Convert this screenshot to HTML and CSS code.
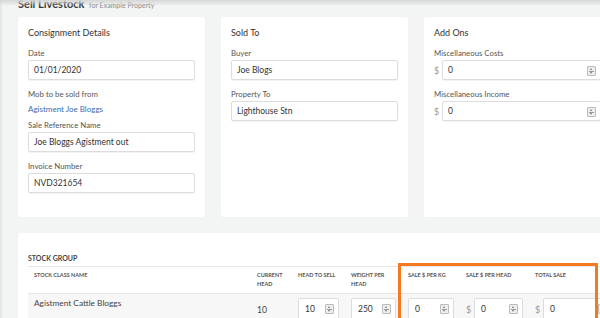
FILE: index.html
```html
<!DOCTYPE html>
<html lang="en">
  <head>
    <meta charset="UTF-8" />
    <meta name="viewport" content="width=device-width, initial-scale=1.0" />
    <title>Sell Livestock</title>
    <link rel="stylesheet" href="styles.css">
  </head>

  <body>
    <div class="topshade"></div>
    <div class="page">
      <h1 class="title">Sell Livestock <small>for Example Property</small></h1>

      <!-- Top cards -->
      <div class="cards">
        <div class="card">
          <h2>Consignment Details</h2>
          <div class="field">
            <label>Date</label>
            <div class="input">01/01/2020</div>
          </div>
          <div class="field">
            <label>Mob to be sold from</label>
            <a class="link" href="#">Agistment Joe Bloggs</a>
          </div>
          <div class="field">
            <label>Sale Reference Name</label>
            <div class="input">Joe Bloggs Agistment out</div>
          </div>
          <div class="field">
            <label>Invoice Number</label>
            <div class="input">NVD321654</div>
          </div>
        </div>

        <div class="card">
          <h2>Sold To</h2>
          <div class="field">
            <label>Buyer</label>
            <div class="input">Joe Blogs</div>
          </div>
          <div class="field">
            <label>Property To</label>
            <div class="input">Lighthouse Stn</div>
          </div>
        </div>

        <div class="card">
          <h2>Add Ons</h2>
          <div class="field">
            <label>Miscellaneous Costs</label>
            <div class="money">
              <span class="dollar">$</span>
              <div class="input num">0<span class="spin"></span></div>
            </div>
          </div>
          <div class="field">
            <label>Miscellaneous Income</label>
            <div class="money">
              <span class="dollar">$</span>
              <div class="input num">0<span class="spin"></span></div>
            </div>
          </div>
        </div>
      </div>

      <!-- Stock group -->
      <div class="card stock">
        <h3>STOCK GROUP</h3>
        <div class="table-wrap">
          <table>
            <thead>
              <tr>
                <th class="c-name">STOCK CLASS NAME</th>
                <th class="c-cur">CURRENT<br>HEAD</th>
                <th class="c-sell">HEAD TO SELL</th>
                <th class="c-wt">WEIGHT PER<br>HEAD</th>
                <th class="c-kg">SALE $ PER KG</th>
                <th class="c-head">SALE $ PER HEAD</th>
                <th class="c-total">TOTAL SALE</th>
              </tr>
            </thead>
            <tbody>
              <tr>
                <td class="name">Agistment Cattle Bloggs</td>
                <td class="cur">10</td>
                <td><div class="input num small">10<span class="spin"></span></div></td>
                <td><div class="input num small">250<span class="spin"></span></div></td>
                <td><div class="input num small">0<span class="spin"></span></div></td>
                <td>
                  <div class="money">
                    <span class="dollar">$</span>
                    <div class="input num small">0<span class="spin"></span></div>
                  </div>
                </td>
                <td>
                  <div class="money">
                    <span class="dollar">$</span>
                    <div class="input num small">0<span class="spin"></span></div>
                  </div>
                </td>
              </tr>
            </tbody>
          </table>
          <div class="highlight"></div>
        </div>
      </div>
    </div>
  </body>
</html>
```

FILE: styles.css
```css
html,
body {
  margin: 0;
  height: 100%;
  overflow: hidden;
}

body {
  background-color: #f3f5f4;
  font-family: Lato, "Open Sans", sans-serif;
  color: #333;
  border-left: 2px solid #e6e8e7;
}

.topshade {
  position: fixed;
  top: 0;
  left: 0;
  right: 0;
  height: 6px;
  background: linear-gradient(#d4d6d5, rgba(243, 245, 244, 0));
}

.page {
  width: 620px;
  padding-left: 16px;
}

.title {
  font-size: 11px;
  font-weight: 700;
  color: #3a3a3a;
  margin: -2px 0 0;
  line-height: 12px;
  height: 19px;
}

.title small {
  font-size: 7px;
  font-weight: 400;
  color: #888;
  margin-left: 2px;
}

.cards {
  display: grid;
  grid-template-columns: 187px 187px 187px;
  gap: 16px;
}

.card {
  background-color: #fff;
  border-radius: 3px;
  padding: 10px 10px 16px;
}

.card h2 {
  font-size: 9px;
  font-weight: 400;
  color: #333;
  margin: 0 0 8px;
  line-height: 12px;
}

.field {
  margin-bottom: 8px;
}

.field label {
  display: block;
  font-size: 7.8px;
  color: #555;
  line-height: 12px;
  margin-bottom: 1px;
}

.link {
  display: block;
  font-size: 8px;
  color: #3b6db1;
  text-decoration: none;
  line-height: 12px;
  margin-top: 3px;
  margin-bottom: -4px;
}

.input {
  position: relative;
  box-sizing: border-box;
  height: 20px;
  border: 1px solid #ddd;
  border-radius: 2px;
  box-shadow: 0 1px 1px rgba(0, 0, 0, 0.05);
  padding: 0 5px;
  font-size: 8.5px;
  line-height: 18px;
  color: #333;
  background: #fff;
}

.money {
  display: flex;
  align-items: center;
}

.dollar {
  width: 8px;
  font-size: 9px;
  color: #999;
}

.money .input {
  flex: 1;
}

.spin {
  position: absolute;
  right: 4px;
  top: 5px;
  width: 7px;
  height: 8px;
  border: 1px solid #bbb;
  border-radius: 1px;
  background:
    linear-gradient(#999, #999) center / 5px 1px no-repeat,
    #eee;
}

.spin::before,
.spin::after {
  content: "";
  position: absolute;
  left: 2px;
  border-left: 1.5px solid transparent;
  border-right: 1.5px solid transparent;
}

.spin::before {
  top: 1px;
  border-bottom: 2px solid #777;
}

.spin::after {
  bottom: 1px;
  border-top: 2px solid #777;
}

.stock {
  margin-top: 16px;
  width: 600px;
  padding-top: 20px;
  height: 200px;
}

.stock h3 {
  font-size: 7px;
  font-weight: 700;
  color: #444;
  margin: 0 0 3px;
  line-height: 10px;
}

.table-wrap {
  position: relative;
}

table {
  border-collapse: collapse;
  width: 590px;
}

th {
  text-align: left;
  font-size: 5.5px;
  font-weight: 700;
  color: #555;
  vertical-align: top;
  padding: 4px 6px 4px;
  line-height: 9px;
  height: 16px;
  border-top: 1px solid #e6e6e6;
  border-bottom: 1px solid #e6e6e6;
}

td {
  background-color: #f7f7f7;
  padding: 4px 6px 0;
  vertical-align: top;
}

.c-name { width: 211px; }
.c-cur { width: 29px; }
.c-sell { width: 41px; }
.c-wt { width: 45px; }
.c-kg { width: 46px; }
.c-head { width: 57px; }

td.name {
  font-size: 8.3px;
  color: #444;
  padding-top: 4px;
}

td.cur {
  font-size: 8.5px;
  color: #444;
  padding-top: 11px;
}

.input.small {
  height: 22px;
  line-height: 20px;
  padding-left: 6px;
}

.highlight {
  position: absolute;
  left: 370px;
  top: -3px;
  width: 194px;
  height: 70px;
  border: 3px solid #f47a22;
}
```
